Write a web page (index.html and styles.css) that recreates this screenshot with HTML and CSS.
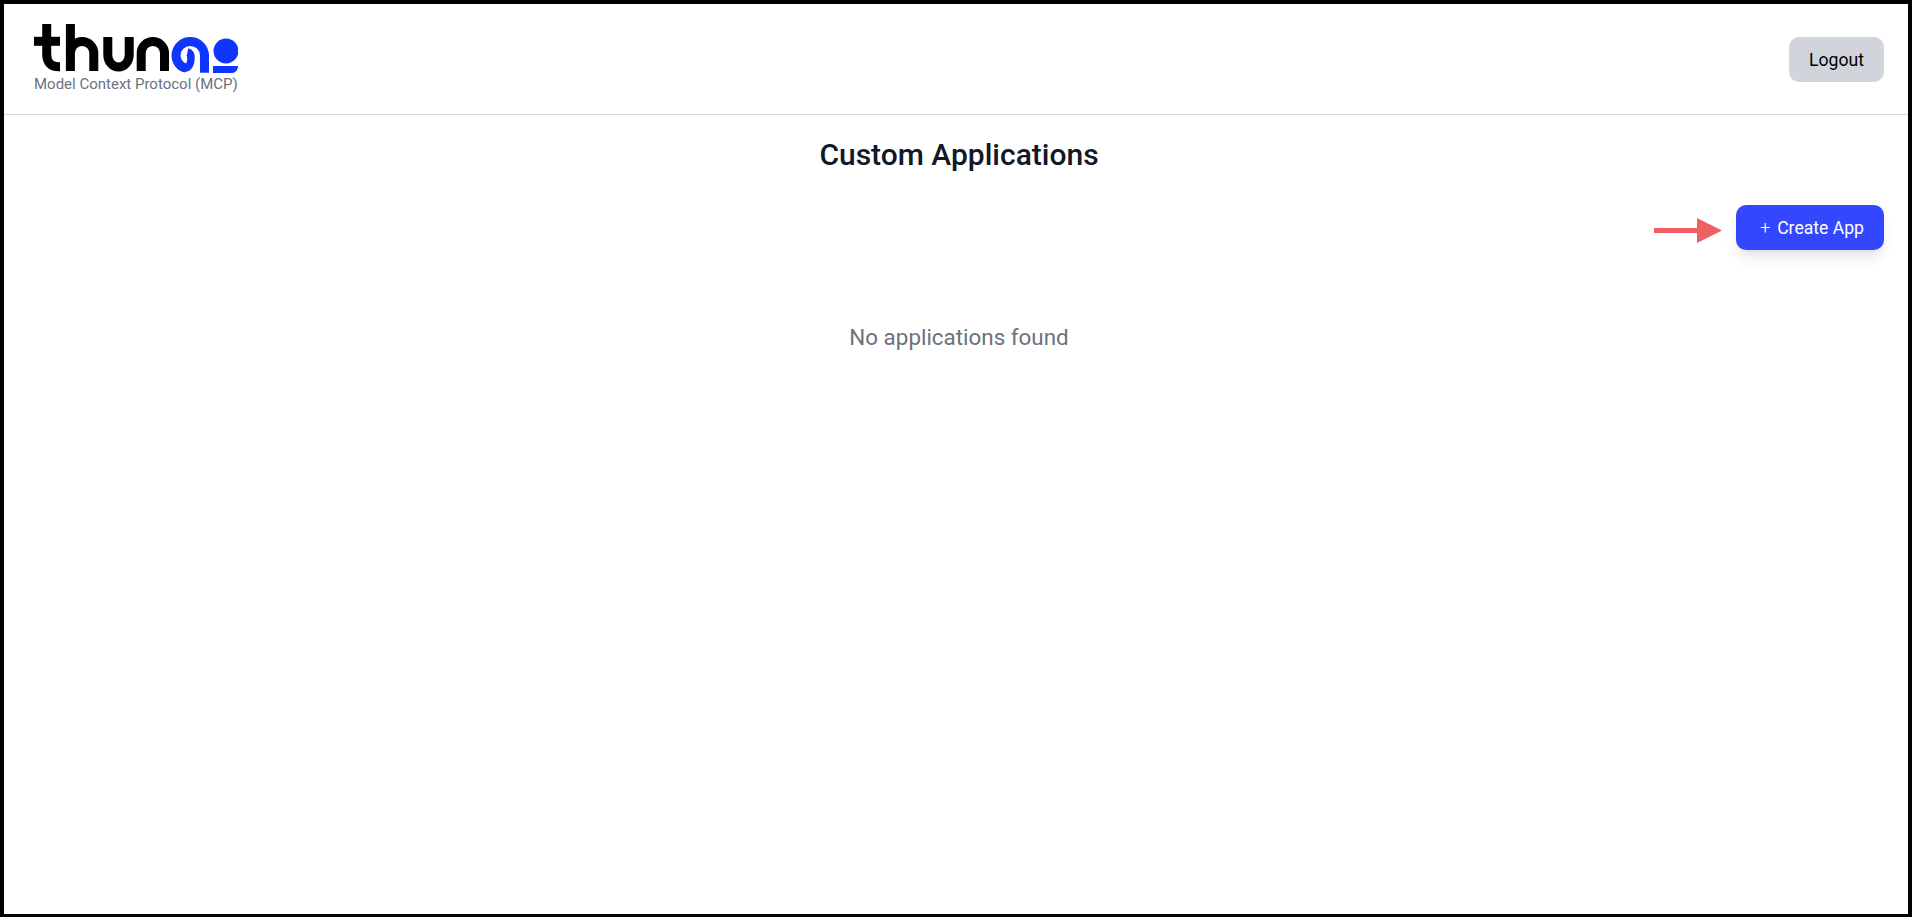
FILE: index.html
```html
<!DOCTYPE html>
<html lang="en">
<head>
<meta charset="utf-8">
<title>Custom Applications</title>
<link rel="stylesheet" href="styles.css">
</head>
<body>
<div class="frame">
  <header class="header">
    <div class="brand">
      <svg class="logo" viewBox="34 24 204 50" width="204" height="50" role="img" aria-label="thunai">
        <g fill="none" stroke="#000" stroke-width="9">
          <path d="M34 41.300H60"/>
          <path d="M46.700 24V54Q46.700 66.800 59 66.800H60"/>
          <path d="M70.400 24V71"/>
          <path d="M70.400 53A11.700 11.500 0 0 1 93.800 53V71"/>
          <path d="M107.800 37V55A10.700 12 0 0 0 129.200 55V37"/>
          <path d="M141.200 71V53A11.650 11.500 0 0 1 164.500 53V71"/>
        </g>
        <path d="M204.500 72.700V55.500A14.250 14 0 0 0 176 55.500A13 13 0 0 0 186 68.200" fill="none" stroke="#0f36ff" stroke-width="9"/>
        <path d="M185 68.200C189 68.200 191 63 191 58.500C191 55 189.500 52.500 187.500 52" fill="none" stroke="#0f36ff" stroke-width="7.500"/>
        <circle cx="226" cy="51" r="12.500" fill="#0f36ff"/>
        <path d="M213 66H238V67Q237 73 231 73H213Z" fill="#0f36ff"/>
      </svg>
      <p class="subtitle">Model Context Protocol (MCP)</p>
    </div>
    <button class="btn btn-logout" type="button">Logout</button>
  </header>
  <main class="content">
    <h1 class="title">Custom Applications</h1>
    <div class="toolbar">
      <svg class="arrow" viewBox="0 0 68 25" width="68" height="25" aria-hidden="true">
        <path d="M0 10H43V0L68 12.500L43 25V15H0Z" fill="#ef6063"/>
      </svg>
      <button class="btn btn-create" type="button"><span class="plus">+</span>Create App</button>
    </div>
    <p class="empty">No applications found</p>
  </main>
</div>
</body>
</html>
```

FILE: styles.css
```css
* {
  box-sizing: border-box;
}

html,
body {
  margin: 0;
  height: 100%;
}

body {
  font-family: Roboto, "Liberation Sans", sans-serif;
  background: #fff;
  overflow: hidden;
}

.frame {
  height: 917px;
  border-style: solid;
  border-color: #000;
  border-width: 4px 4px 3px 4px;
  background: #fff;
}

.header {
  display: flex;
  justify-content: space-between;
  align-items: center;
  padding: 20px 24px 20px 30px;
  border-bottom: 1px solid #d8d6e0;
  height: 111px;
}

.brand {
  display: flex;
  flex-direction: column;
}

.logo {
  display: block;
}

.subtitle {
  margin: 0;
  font-size: 15px;
  line-height: 20px;
  color: #6b7280;
}

.btn {
  display: flex;
  align-items: center;
  font-family: inherit;
  font-size: 17.6px;
  line-height: 24px;
  height: 45px;
  padding: 0 20px;
  border: 0;
  border-radius: 10px;
  cursor: pointer;
}

.btn-logout {
  padding-top: 2px;
  background: #d1d5db;
  color: #000;
}

.content {
  padding: 22px 24px 0 30px;
}

.title {
  margin: 0;
  font-size: 30px;
  line-height: 36px;
  font-weight: 500;
  text-align: center;
  color: #111827;
}

.toolbar {
  display: flex;
  justify-content: flex-end;
  align-items: center;
  gap: 14px;
  margin-top: 32px;
}

.arrow {
  margin-top: 6px;
}

.btn-create {
  padding-left: 24px;
  background: #3347ff;
  color: #fff;
  box-shadow: 0 10px 15px -3px rgba(0, 0, 0, 0.1), 0 4px 6px -4px rgba(0, 0, 0, 0.1);
}

.plus {
  margin-right: 7px;
  font-size: 17.6px;
  font-weight: 300;
}

.empty {
  margin: 73px 0 0;
  font-size: 22.4px;
  line-height: 28px;
  text-align: center;
  color: #6b7280;
}
```
